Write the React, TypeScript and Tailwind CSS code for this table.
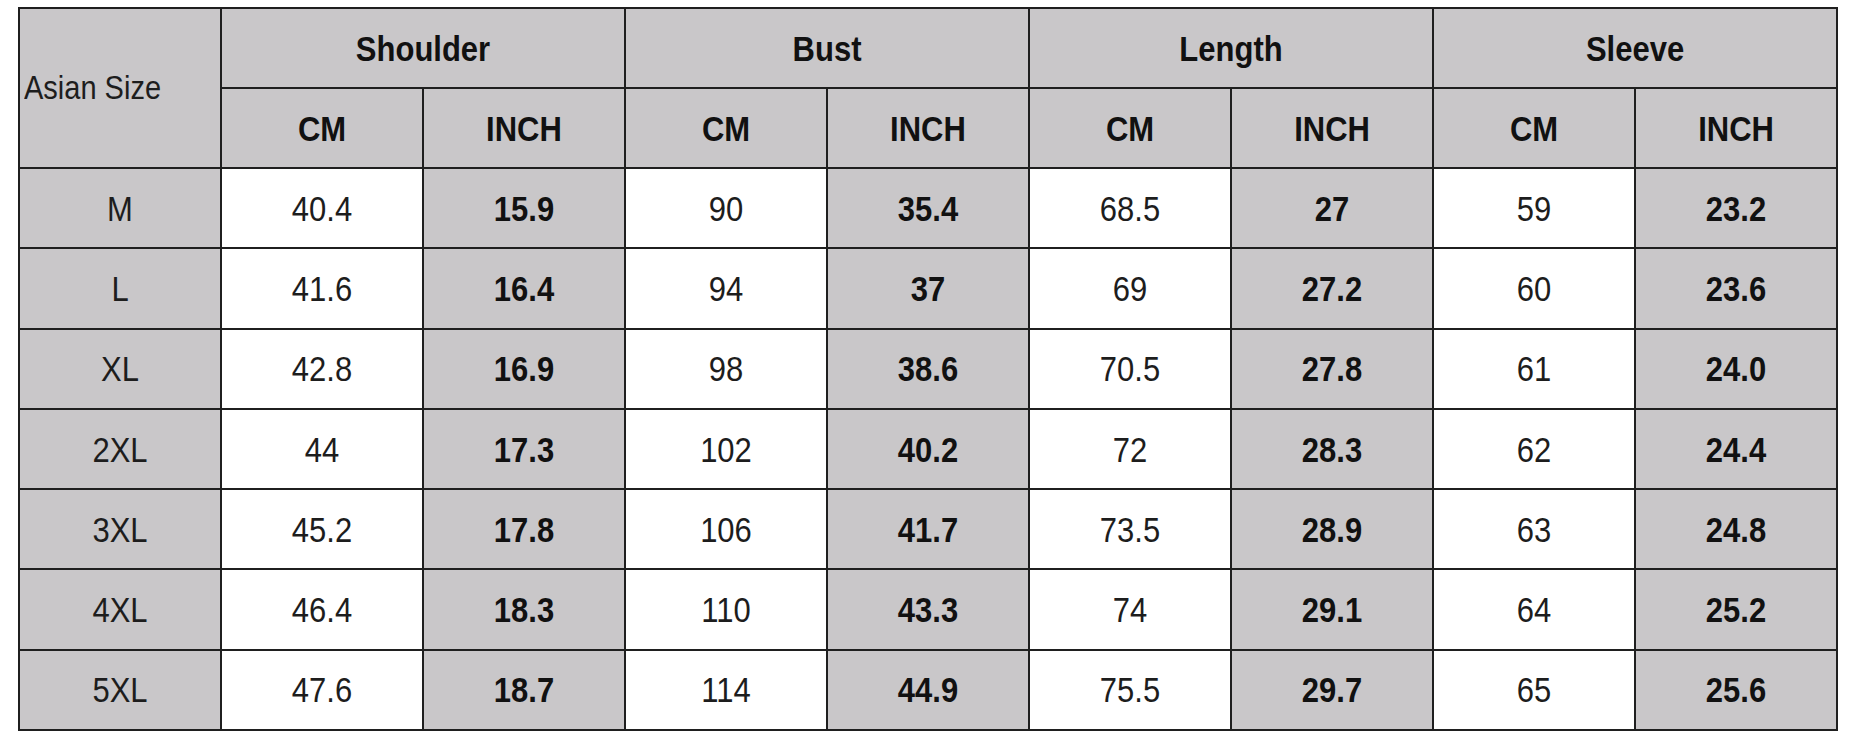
const GROUPS = ['Shoulder', 'Bust', 'Length', 'Sleeve'];

const ROWS: Array<{ size: string; values: string[] }> = [
  { size: 'M', values: ['40.4', '15.9', '90', '35.4', '68.5', '27', '59', '23.2'] },
  { size: 'L', values: ['41.6', '16.4', '94', '37', '69', '27.2', '60', '23.6'] },
  { size: 'XL', values: ['42.8', '16.9', '98', '38.6', '70.5', '27.8', '61', '24.0'] },
  { size: '2XL', values: ['44', '17.3', '102', '40.2', '72', '28.3', '62', '24.4'] },
  { size: '3XL', values: ['45.2', '17.8', '106', '41.7', '73.5', '28.9', '63', '24.8'] },
  { size: '4XL', values: ['46.4', '18.3', '110', '43.3', '74', '29.1', '64', '25.2'] },
  { size: '5XL', values: ['47.6', '18.7', '114', '44.9', '75.5', '29.7', '65', '25.6'] },
];

const cell = 'border-2 border-[#1f1f1f] text-center align-middle p-0';

// the source image is stretched a little vertically
function T({ children }: { children: React.ReactNode }) {
  return <span className="inline-block scale-y-[1.15]">{children}</span>;
}

export default function App() {
  return (
    <div className="min-h-[740px] bg-white pl-[18px] pt-[7px] font-['Liberation_Sans',Arial,sans-serif] text-[31px] leading-none text-[#1d1d1d]">
      <table className="w-[1820px] table-fixed border-collapse">
        <colgroup>
          {Array.from({ length: 9 }).map((_, i) => (
            <col key={i} className="w-[202px]" />
          ))}
        </colgroup>
        <thead>
          <tr className="h-[80px]">
            <th
              rowSpan={2}
              className={`${cell} bg-[#c9c7c9] pl-[4px] text-left text-[29px] font-normal`}
            >
              <T>Asian Size</T>
            </th>
            {GROUPS.map((g) => (
              <th key={g} colSpan={2} className={`${cell} bg-[#c9c7c9] font-bold text-[#111]`}>
                <T>{g}</T>
              </th>
            ))}
          </tr>
          <tr className="h-[80px]">
            {GROUPS.map((g) => (
              <>
                <th key={`${g}-cm`} className={`${cell} bg-[#c9c7c9] font-bold text-[#111]`}><T>CM</T></th>
                <th key={`${g}-in`} className={`${cell} bg-[#c9c7c9] font-bold text-[#111]`}><T>INCH</T></th>
              </>
            ))}
          </tr>
        </thead>
        <tbody>
          {ROWS.map((r) => (
            <tr key={r.size} className="h-[80.3px]">
              <td className={`${cell} bg-[#c9c7c9]`}><T>{r.size}</T></td>
              {r.values.map((v, i) =>
                i % 2 === 0 ? (
                  <td key={i} className={`${cell} bg-white`}><T>{v}</T></td>
                ) : (
                  <td key={i} className={`${cell} bg-[#c9c7c9] font-bold text-[#111]`}><T>{v}</T></td>
                ),
              )}
            </tr>
          ))}
        </tbody>
      </table>
    </div>
  );
}
